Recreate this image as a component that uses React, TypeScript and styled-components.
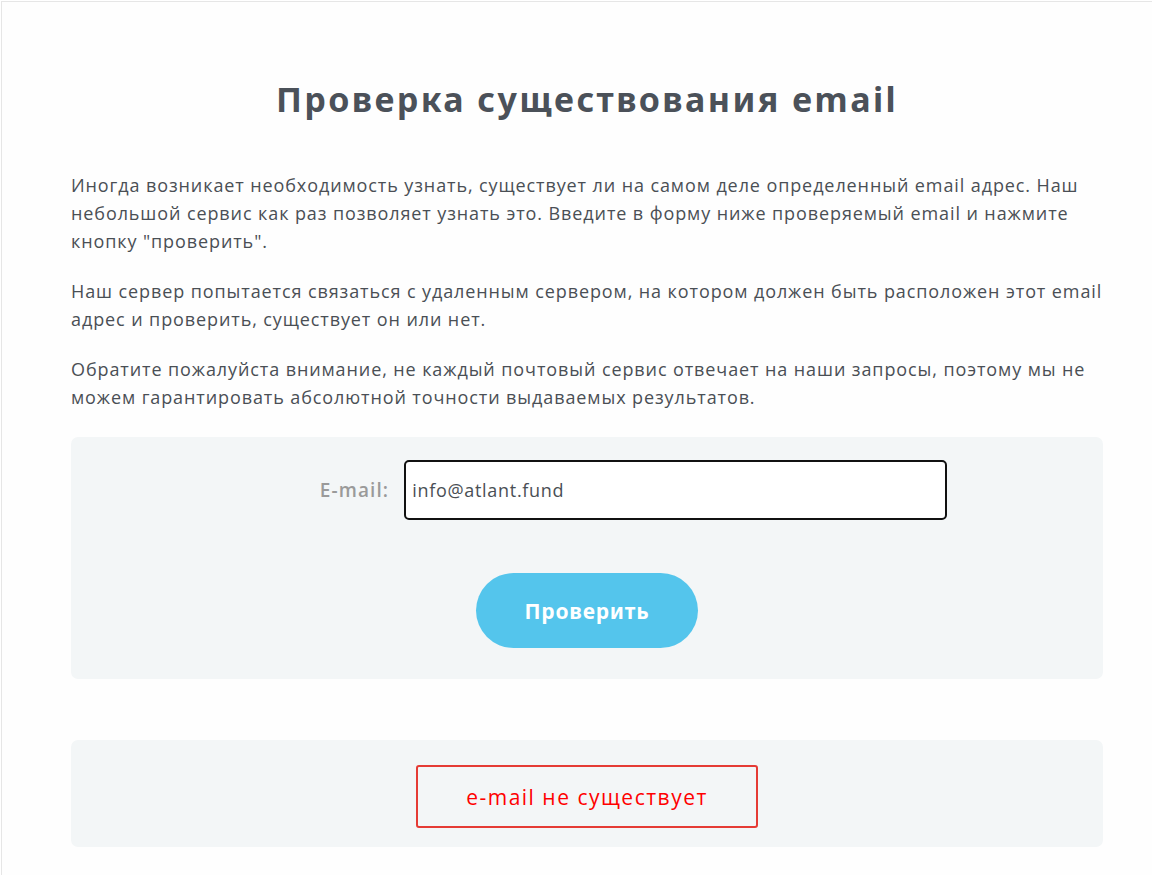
import React, { useState } from 'react';
import styled, { createGlobalStyle } from 'styled-components';

const GlobalStyle = createGlobalStyle`
  html, body {
    margin: 0;
    padding: 0;
    background: #ffffff;
  }
  * {
    box-sizing: border-box;
  }
`;

const Frame = styled.div`
  margin: 1px 0 0 1px;
  border-top: 1px solid #e6e6e6;
  border-left: 1px solid #e6e6e6;
  background: #fefefe;
  min-height: 874px;
  padding: 75px 49px 26px 69px;
`;

const Title = styled.h1`
  margin: 0 0 50px;
  text-align: center;
  font-family: 'Noto Sans', sans-serif;
  font-weight: 700;
  font-size: 34px;
  line-height: 44px;
  letter-spacing: 2.4px;
  color: #4b5159;
`;

const Text = styled.p`
  margin: 0 0 22px;
  font-family: 'Open Sans', sans-serif;
  font-size: 18px;
  line-height: 28px;
  letter-spacing: 0.9px;
  color: #4a4f55;

  &:last-of-type {
    margin-bottom: 26px;
  }
`;

const Panel = styled.div<{ $pad: string }>`
  background: #f3f6f7;
  border-radius: 7px;
  padding: ${(p) => p.$pad};
  display: flex;
  flex-direction: column;
  align-items: center;
`;

const FieldRow = styled.div`
  display: flex;
  align-items: center;
  gap: 15px;
  margin-left: 93px;
`;

const Label = styled.label`
  font-family: 'Open Sans', sans-serif;
  font-weight: 600;
  font-size: 19px;
  letter-spacing: 1.1px;
  color: #9a9a9a;
`;

const Input = styled.input`
  width: 543px;
  height: 60px;
  border: 2px solid #111;
  border-radius: 5px;
  padding: 0 6px;
  font-family: 'Open Sans', sans-serif;
  font-size: 18px;
  letter-spacing: 0.7px;
  color: #4a4f55;
  background: #fff;
  outline: none;
`;

const Button = styled.button`
  margin-top: 53px;
  width: 222px;
  height: 75px;
  border: none;
  border-radius: 38px;
  background: #54c5ec;
  color: #fff;
  font-family: 'Noto Sans', sans-serif;
  font-weight: 700;
  font-size: 21px;
  letter-spacing: 0.8px;
  cursor: pointer;
`;

const Result = styled.div`
  width: 342px;
  height: 63px;
  border: 2px solid #e53b35;
  border-radius: 3px;
  display: flex;
  align-items: center;
  justify-content: center;
  font-family: 'Open Sans', sans-serif;
  font-size: 21px;
  letter-spacing: 1.5px;
  color: #ff0000;
`;

const Spacer = styled.div`
  height: 61px;
`;

export default function App() {
  const [email, setEmail] = useState('info@atlant.fund');
  return (
    <>
      <GlobalStyle />
      <Frame>
        <Title>Проверка существования email</Title>
        <Text>
          Иногда возникает необходимость узнать, существует ли на самом деле определенный email адрес. Наш
          небольшой сервис как раз позволяет узнать это. Введите в форму ниже проверяемый email и нажмите
          кнопку "проверить".
        </Text>
        <Text>
          Наш сервер попытается связаться с удаленным сервером, на котором должен быть расположен этот email
          адрес и проверить, существует он или нет.
        </Text>
        <Text>
          Обратите пожалуйста внимание, не каждый почтовый сервис отвечает на наши запросы, поэтому мы не
          можем гарантировать абсолютной точности выдаваемых результатов.
        </Text>
        <Panel $pad="23px 0 31px">
          <FieldRow>
            <Label htmlFor="email">E-mail:</Label>
            <Input id="email" value={email} onChange={(e) => setEmail(e.target.value)} />
          </FieldRow>
          <Button>Проверить</Button>
        </Panel>
        <Spacer />
        <Panel $pad="25px 0 19px">
          <Result>e-mail не существует</Result>
        </Panel>
      </Frame>
    </>
  );
}
